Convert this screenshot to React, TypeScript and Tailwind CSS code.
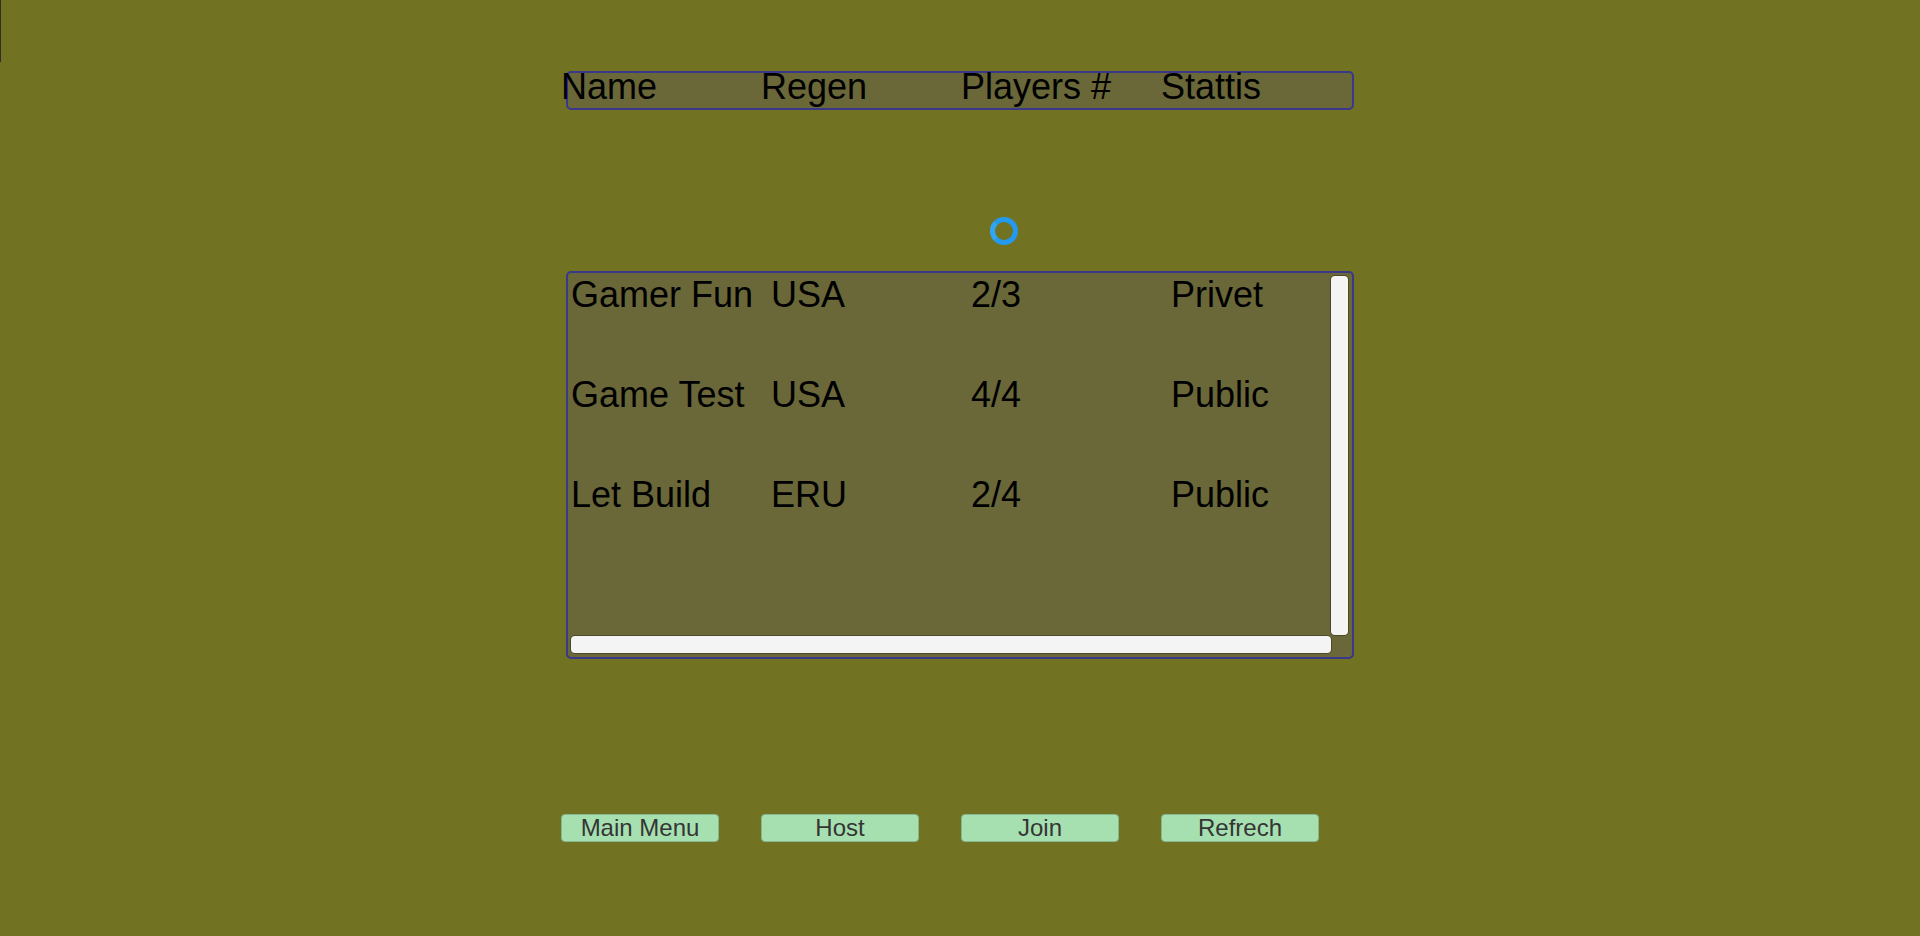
import React from 'react';

type Lobby = {
  name: string;
  region: string;
  players: string;
  status: string;
};

const lobbies: Lobby[] = [
  { name: 'Gamer Fun', region: 'USA', players: '2/3', status: 'Privet' },
  { name: 'Game Test', region: 'USA', players: '4/4', status: 'Public' },
  { name: 'Let Build', region: 'ERU', players: '2/4', status: 'Public' },
];

const columns = ['Name', 'Regen', 'Players #', 'Stattis'];
const actions = ['Main Menu', 'Host', 'Join', 'Refrech'];

const LobbyRow = ({ lobby }: { lobby: Lobby }) => (
  <li className="flex h-[100px] shrink-0 items-start text-[36px] leading-[42px] text-black">
    <span className="w-[200px] shrink-0 whitespace-nowrap">{lobby.name}</span>
    <span className="w-[200px] shrink-0">{lobby.region}</span>
    <span className="w-[200px] shrink-0">{lobby.players}</span>
    <span className="w-[200px] shrink-0">{lobby.status}</span>
  </li>
);

const App = () => {
  return (
    <div className="relative h-[936px] w-full overflow-hidden bg-[#727223] font-['Liberation_Sans',Arial,sans-serif]">
      {/* stray edge line in the corner */}
      <div className="absolute left-0 top-0 h-[62px] w-px bg-[#2e2e2e]" />

      <div className="mx-auto flex w-[788px] flex-col pt-[71px]">
        {/* column headings */}
        <div className="h-[39px] rounded-[5px] border-2 border-[#39388a] bg-[#6a6738]">
          <div className="-ml-[7px] -mt-[7px] flex text-[36px] leading-[42px] text-black">
            {columns.map((col) => (
              <span key={col} className="w-[200px] shrink-0 whitespace-nowrap">
                {col}
              </span>
            ))}
          </div>
        </div>

        {/* loading spinner */}
        <div className="ml-[424px] mt-[107px] h-[28px] w-[28px] rounded-full border-[5px] border-[#2499f0] border-l-[#2ea8f5]" />

        {/* lobby list */}
        <div className="mt-[26px] flex h-[388px] flex-col rounded-[5px] border-2 border-[#39388a] bg-[#6a6738] pb-[4px] pl-[3px] pr-[4px] pt-[3px]">
          <div className="flex min-h-0 flex-1">
            <ul className="-mt-[2px] flex min-w-0 flex-1 flex-col">
              {lobbies.map((lobby) => (
                <LobbyRow key={lobby.name} lobby={lobby} />
              ))}
            </ul>
            <div className="mb-px w-[17px] rounded-[4px] bg-[#f4f4f4] shadow-[0_0_0_1px_rgba(40,40,20,0.45)]" />
          </div>
          <div className="h-[17px] w-[760px] rounded-[4px] bg-[#f4f4f4] shadow-[0_0_0_1px_rgba(40,40,20,0.45)]" />
        </div>

        {/* actions */}
        <div className="-ml-[5px] mt-[155px] flex gap-[42px]">
          {actions.map((label) => (
            <button
              key={label}
              className="h-[28px] w-[158px] rounded-[4px] border border-[#86b78f] bg-[#a6e0b0] text-[24px] leading-[26px] text-[#353535]"
            >
              {label}
            </button>
          ))}
        </div>
      </div>
    </div>
  );
};

export default App;
